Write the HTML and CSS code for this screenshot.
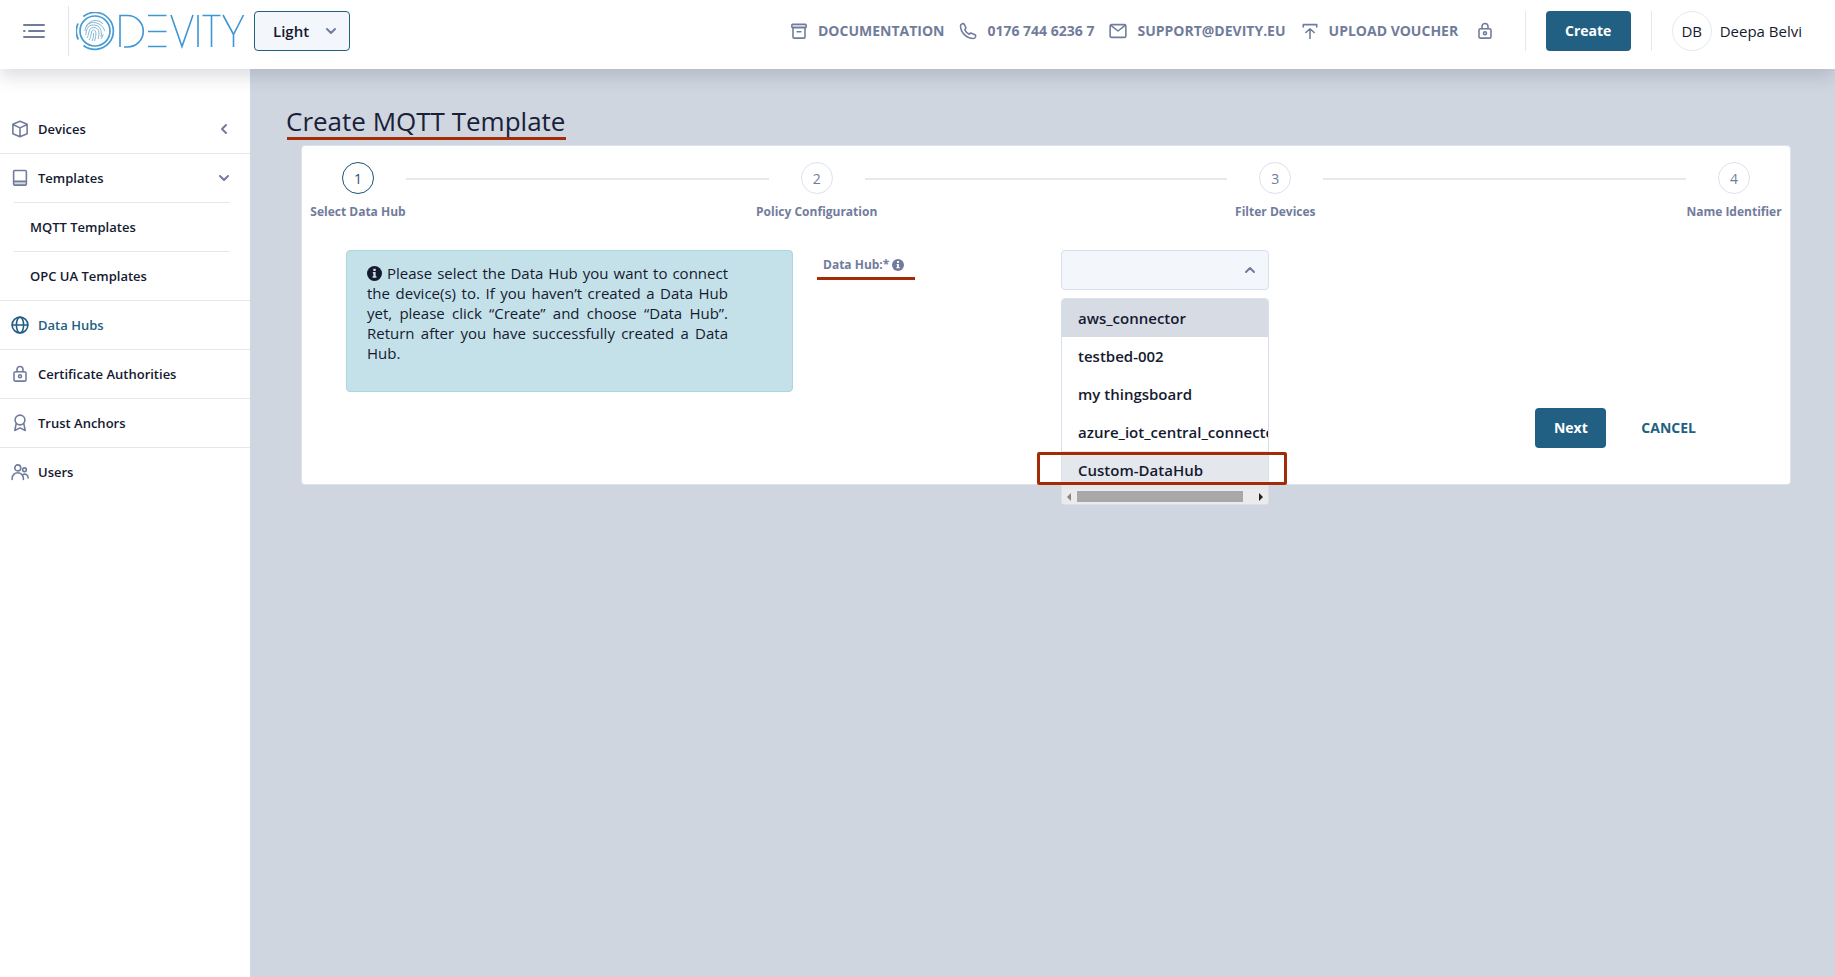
FILE: index.html
```html
<!DOCTYPE html>
<html lang="en">
<head>
<meta charset="utf-8">
<title>Create MQTT Template</title>
<link rel="stylesheet" href="styles.css">
</head>
<body>
<svg class="defs" width="0" height="0">
  <symbol id="lock" viewBox="0 0 24 24"><rect x="4" y="9" width="16" height="12.5" rx="2"/><path d="M8 9V6a4 4 0 0 1 8 0v3"/><circle cx="12" cy="15" r="2"/></symbol>
  <symbol id="info" viewBox="0 0 16 16"><circle cx="8" cy="8" r="8" fill="currentColor" stroke="none"/><path class="info-mark" d="M6.7 2.8h2.6v2.5H6.7zM6.2 6.5h3v4.3h.9v1.6H5.9v-1.6h.9V8.1h-.6z"/></symbol>
  <symbol id="down" viewBox="0 0 12 12"><path d="M2 4l4 4 4-4"/></symbol>
</svg>
<header class="header">
  <svg class="menu" viewBox="0 0 22 14"><path d="M1 1h20M6 7h15M1 13h20M1 7h.6"/></svg>
  <div class="brand">
    <svg viewBox="0 0 170 40">
      <g class="ring"><circle cx="19" cy="19" r="15"/><path d="M7.3 4.5A18.5 18.5 0 1 1 7.5 33.5M2 11.5a18.5 18.5 0 0 0 .3 16"/></g>
      <g class="print"><path d="M10 15a10 10 0 0 1 17-3M9 19c0-5 4-8.500 8.500-8.500S28 14 28.500 19M9.500 23c1.500-4 .5-10 8-10s8.500 7 7.500 12M11 26c2.500-4 1-10.500 6.500-10.500S24 21 22 27M13 28c3-4 1.500-10 4.500-10s3 5 1 11M16 29c2-4 1.500-6 1.500-8M25 27c1.500-2 2-4 2-5"/></g>
      <g class="word"><path d="M44 35V3.500H51.500A15.500 15.500 0 0 1 51.500 35h-3.500M72 3.500H90.500M72 19.500H90.500M72 34.500H90.500M95 3l11 31.500L117 3M122 3v32M126.500 3.500h18M135.500 3.500V35M147 3L157.500 22.500 167.500 3M157.500 22v13"/></g>
    </svg>
  </div>
  <button class="theme">Light <svg><use href="#down"/></svg></button>
  <nav class="links">
    <a><svg class="ic" viewBox="0 0 24 24"><path class="tint" d="M3 3h18v4.500H3z"/><rect x="2.500" y="3" width="19" height="4.500" rx="1"/><path d="M4 7.500V20a1.500 1.500 0 0 0 1.500 1.500h13A1.500 1.500 0 0 0 20 20V7.500M9.500 13h5"/></svg><span>DOCUMENTATION</span></a>
    <a><svg class="ic" viewBox="0 0 24 24"><path d="M2 5c0-1.500 1-2.500 2.500-2.800 1-.2 2 0 2.600 1L9 7.300c.6 1.200-.2 2.200-1.300 3 1 2.500 3.300 4.700 6 6 .8-1.100 1.800-1.900 3-1.300l4.500 2c1 .6 1.200 1.500 1 2.500-.4 1.600-1.500 2.500-3 2.500C10 22 2 14 2 5z"/></svg><span>0176 744 6236 7</span></a>
    <a><svg class="ic" viewBox="0 0 24 24"><rect x="1.500" y="3.500" width="21" height="17" rx="2"/><path d="M2.500 4.500L12 12l9.500-7.500"/></svg><span>SUPPORT@DEVITY.EU</span></a>
    <a><svg class="ic" viewBox="0 0 24 24"><path d="M3 6.500V3.500h18v3M12 22V9.500M6.500 14L12 9l5.500 5"/></svg><span>UPLOAD VOUCHER</span></a>
    <a class="last"><svg class="ic"><use href="#lock"/></svg></a>
  </nav>
  <div class="create-wrap"><button class="btn">Create</button></div>
  <div class="avatar">DB</div><span class="user">Deepa Belvi</span>
</header>
<div class="body">
  <aside class="side">
    <a><svg class="ic" viewBox="0 0 24 24"><path d="M12 1.800l9.500 4v12.500L12 22.200l-9.500-4V5.800zM2.500 6L12 10.500 21.500 6M12 10.500V22"/></svg>Devices<svg class="arrow left"><use href="#down"/></svg></a>
    <a><svg class="ic" viewBox="0 0 24 24"><path class="tint" d="M3.500 16.500h17v5h-17z"/><rect x="3.500" y="2" width="17" height="19.500" rx="1.500"/><path d="M3.500 16.500h17"/></svg>Templates<svg class="arrow"><use href="#down"/></svg></a>
    <a class="sub">MQTT Templates</a>
    <a class="sub">OPC UA Templates</a>
    <a class="active"><svg class="ic" viewBox="0 0 24 24"><circle cx="12" cy="12" r="10.500"/><ellipse cx="12" cy="12" rx="4.800" ry="10.500"/><path d="M1.500 12h21"/></svg>Data Hubs</a>
    <a><svg class="ic"><use href="#lock"/></svg>Certificate Authorities</a>
    <a><svg class="ic" viewBox="0 0 24 24"><circle cx="12" cy="8" r="6.500"/><path d="M7 12.500L5 22l7-3.500 7 3.500-2-9.500"/></svg>Trust Anchors</a>
    <a><svg class="ic" viewBox="0 0 24 24"><circle cx="9" cy="6.500" r="4"/><circle cx="18" cy="9" r="2.500"/><path d="M1.500 22v-1.500a7.500 7.500 0 0 1 15 0V22M16 15.500a4.500 4.500 0 0 1 6.800 4V20"/></svg>Users</a>
  </aside>
  <main class="main">
    <h1><span>Create MQTT Template</span></h1>
    <section class="card">
      <div class="steps">
        <div class="step on"><i>1</i><b>Select Data Hub</b></div><hr>
        <div class="step"><i>2</i><b>Policy Configuration</b></div><hr>
        <div class="step"><i>3</i><b>Filter Devices</b></div><hr>
        <div class="step"><i>4</i><b>Name Identifier</b></div>
      </div>
      <div class="form">
        <div class="alert"><p><svg><use href="#info"/></svg> Please select the Data Hub you want to connect the device(s) to. If you haven’t created a Data Hub yet, please click “Create” and choose “Data Hub”. Return after you have successfully created a Data Hub.</p></div>
        <label class="label">Data Hub:* <svg><use href="#info"/></svg></label>
        <div class="select">
          <div class="box"><svg class="up"><use href="#down"/></svg></div>
          <div class="menu-list">
            <div class="opt sel">aws_connector</div>
            <div class="opt">testbed-002</div>
            <div class="opt">my thingsboard</div>
            <div class="opt">azure_iot_central_connector</div>
            <div class="opt hov">Custom-DataHub</div>
            <div class="bar"><svg viewBox="0 0 4 8"><path d="M4 0v8L0 4z"/></svg><div class="thumb"></div><svg class="dark" viewBox="0 0 4 8"><path d="M0 0v8l4-4z"/></svg></div>
          </div>
          <div class="mark"></div>
        </div>
      </div>
      <div class="actions"><button class="btn next">Next</button><a>CANCEL</a></div>
    </section>
  </main>
</div>
</body>
</html>
```
FILE: styles.css
```css
* { box-sizing: border-box; }
body { margin: 0; height: 977px; overflow: hidden; display: flex; flex-direction: column; font-family: "Open Sans", "Noto Sans", sans-serif; font-size: 15px; color: #151a30; background: #cfd6e0; }
svg { fill: none; stroke: currentColor; flex: none; }
.defs { position: absolute; }
.ic { width: 18px; height: 18px; stroke-width: 2.100; stroke-linejoin: round; stroke-linecap: round; color: #717c9c; }
.tint { fill: #d3d7e0; stroke: none; }
.info-mark { fill: var(--mark, #fff); stroke: none; }
button { font: inherit; border: 0; }

.header { position: relative; z-index: 2; height: 69px; flex: none; display: flex; align-items: center; padding: 0 33px 7px 23px; background: #fff; box-shadow: 0 8px 16px rgba(44, 51, 73, .16); }
.menu { width: 22px; height: 14px; stroke: #717c9c; stroke-width: 2; stroke-linecap: round; }
.brand { height: 50px; margin-left: 23px; padding: 6px 0 0 7px; border-left: 1px solid #dfe5ee; }
.brand svg { width: 170px; height: 40px; display: block; }
.ring { stroke: #459bd3; stroke-width: 1.700; }
.print { stroke: #64a5cc; stroke-width: .8; }
.word { stroke: #3e96d2; stroke-width: 1.600; }
.theme { width: 96px; height: 40px; margin-left: 8px; padding: 0 12px 0 18px; display: flex; align-items: center; justify-content: space-between; border: 1px solid #215f83; border-radius: 4px; background: #f3f6fb; font-weight: 600; color: #151a30; }
.theme svg, .arrow, .up { width: 12px; height: 12px; stroke: #717c9c; stroke-width: 2; stroke-linecap: round; stroke-linejoin: round; }
.links { margin-left: auto; display: flex; align-items: center; gap: 15px; color: #717c9c; font-weight: 700; font-size: 14px; }
.links a { display: flex; align-items: center; gap: 10px; }
.links span { padding-bottom: 2px; }
.links .last { margin-left: 2.500px; }
.create-wrap { margin-left: 31px; padding: 0 20px; border: solid #e4e9f0; border-width: 0 1px; }
.btn { display: block; width: 85px; height: 40px; padding: 0 0 2px; border-radius: 4px; color: #fff; background: #215f83; font-weight: 700; font-size: 14px; }
.avatar { width: 40px; height: 40px; margin-left: 20px; border: 1px solid #e4e9f2; border-radius: 50%; display: grid; place-items: center; }
.user { margin-left: 8px; }

.body { display: flex; flex: 1; min-height: 0; }
.side { width: 250px; padding-top: 36px; background: #fff; font-size: 13px; font-weight: 600; }
.side a { height: 49px; display: flex; align-items: center; padding: 0 20px 0 11px; gap: 9px; border-bottom: 1px solid #e3e8ef; }
.side a:last-child { border-color: transparent; }
.side a:nth-child(2), .side a.sub:nth-child(3) { border-color: transparent; background: linear-gradient(#e3e8ef, #e3e8ef) 14px 100% / 216px 1px no-repeat border-box; }
.side .sub { padding-left: 30px; }
.side .active, .active .ic { color: #215f83; }
.arrow { margin-left: auto; }
.left { transform: rotate(90deg); }

.main { flex: 1; padding: 34px 44px 0 36px; }
h1 { margin: 0; height: 42px; font-size: 26px; line-height: 36px; font-weight: 400; color: #192038; }
h1 span { display: inline-block; height: 37px; padding-right: 1px; background: linear-gradient(#a32b05, #a32b05) 1px 100% / 100% 3px no-repeat; }
.card { height: 340px; margin: 0 0 0 15px; background: #fff; border: 1px solid #dde2ee; border-radius: 4px; padding: 16px 8px 0; }
.steps { height: 88px; display: flex; align-items: flex-start; }
.step { width: 96px; display: flex; flex-direction: column; align-items: center; color: #717c9c; }
.step i { width: 32px; height: 32px; border: 1px solid #dde2ee; border-radius: 50%; display: grid; place-items: center; font-style: normal; font-size: 14px; }
.step b { margin-top: 10px; font-size: 12px; line-height: 16px; white-space: nowrap; }
.step.on i { border-color: #1d5276; color: #1d5276; }
hr { flex: 1; height: 2px; margin: 16px 0 0; border: 0; background: #e4e9ee; }
.form { display: flex; align-items: flex-start; padding-left: 36px; height: 158px; }
.alert { width: 447px; height: 142px; padding: 12px 64px 0 20px; border: 1px solid #a9d8df; border-radius: 4px; background: #c4e1e9; --mark: #c4e1e9; }
.alert p { margin: 0; line-height: 20px; text-align: justify; }
.alert svg { width: 15px; height: 15px; vertical-align: -2px; }
.label { width: 98px; height: 30px; margin-left: 24px; padding: 7px 0 0 6px; border-bottom: 3px solid #a32b05; font-size: 12px; line-height: 16px; font-weight: 700; color: #717c9c; white-space: nowrap; }
.label svg { width: 12px; height: 12px; vertical-align: -1.500px; }
.select { position: relative; width: 208px; margin-left: 146px; }
.box { height: 40px; border: 1px solid #d8dfed; border-radius: 4px; background: #f3f6fb; display: flex; align-items: center; justify-content: flex-end; padding-right: 12px; }
.up { transform: rotate(180deg); }
.menu-list { position: absolute; z-index: 3; top: 48px; left: 0; width: 208px; height: 207px; border: 1px solid #d8dfed; border-radius: 4px; background: #fff; overflow: hidden; }
.opt { height: 38px; padding-left: 16px; line-height: 38px; font-weight: 600; white-space: nowrap; overflow: hidden; }
.sel { background: #d7dbe4; }
.hov { background: #e4e7ec; }
.bar { height: 15px; padding: 0 5px; display: flex; align-items: center; gap: 6px; background: #ebebeb; }
.bar svg { width: 4px; height: 8px; fill: #858585; stroke: none; }
.bar .dark { fill: #222; margin-left: auto; }
.thumb { width: 166px; height: 11px; background: #a8a8a8; }
.mark { position: absolute; z-index: 4; left: -24px; top: 202px; width: 250px; height: 33px; border: 3px solid #a32b05; border-radius: 2px; }
.actions { display: flex; align-items: center; gap: 35px; justify-content: flex-end; padding-right: 86px; color: #215f83; font-weight: 700; font-size: 14px; }
.actions a { padding-bottom: 2px; }
.next { width: 71px; }
```
